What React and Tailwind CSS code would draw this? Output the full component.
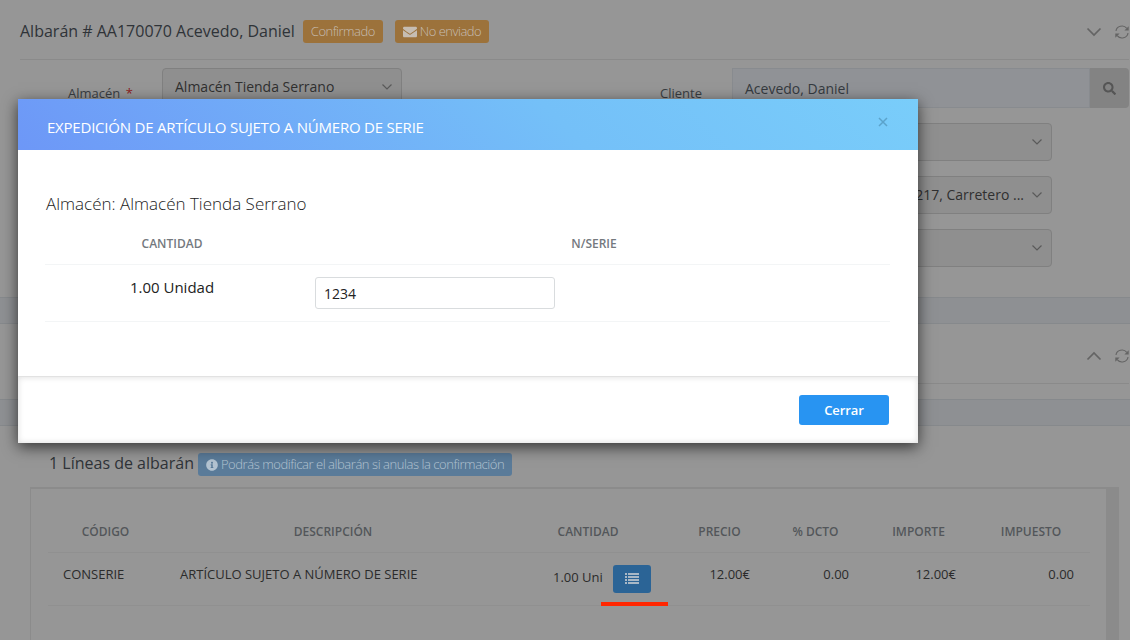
import React, { useState } from "react";
import { FaEnvelope, FaSearch, FaInfoCircle } from "react-icons/fa";

const lines = [
  {
    code: "CONSERIE",
    description: "ARTÍCULO SUJETO A NÚMERO DE SERIE",
    quantity: "1.00 Uni",
    price: "12.00€",
    discount: "0.00",
    amount: "12.00€",
    tax: "0.00",
  },
];

const lineColumns = ["CÓDIGO", "DESCRIPCIÓN", "CANTIDAD", "PRECIO", "% DCTO", "IMPORTE", "IMPUESTO"];

const lineGrid = "grid grid-cols-[115px_340px_170px_93px_99px_107px_118px]";

function ListIcon() {
  return (
    <svg width="14" height="12" viewBox="0 0 14 12" fill="currentColor" shapeRendering="crispEdges">
      {[0, 3, 6, 9].map((y) => (
        <g key={y}>
          <rect x="0" y={y} width="2" height="2" />
          <rect x="3" y={y} width="11" height="2" />
        </g>
      ))}
    </svg>
  );
}

function Chevron({ up }) {
  return (
    <svg
      width="16"
      height="10"
      viewBox="0 0 16 10"
      fill="none"
      stroke="currentColor"
      strokeWidth="1.7"
      className={up ? "rotate-180" : ""}
    >
      <path d="M1.5 1.5L8 8l6.500-6.500" />
    </svg>
  );
}

function RefreshIcon() {
  return (
    <svg width="14" height="14" viewBox="0 0 14 14" fill="none" stroke="currentColor" strokeWidth="1.100">
      <path d="M1 6a6 5.500 0 0 1 10.800-2.700M13 8a6 5.500 0 0 1-10.800 2.700" />
      <path d="M13.700 1.200v4.300h-4.300zM.3 12.800v-4.300h4.300z" fill="currentColor" stroke="none" />
    </svg>
  );
}

function Select({ value, className }) {
  return (
    <div className={`flex items-center border border-[#808080] rounded bg-[#8f8f8f] h-[38px] pl-3 pr-[9px] ${className}`}>
      <span className="flex-1 truncate">{value}</span>
      <svg width="10" height="6" viewBox="0 0 10 6" fill="none" stroke="#5a5a5a" strokeWidth="1.200" className="ml-2">
        <path d="M.5.5L5 5 9.500.5" />
      </svg>
    </div>
  );
}

function PanelTools({ open }) {
  return (
    <div className="flex items-center gap-[13px] text-[#646464]">
      <Chevron up={open} />
      <RefreshIcon />
    </div>
  );
}

function DeliveryForm() {
  return (
    <div className="flex h-[237px] pt-2 text-sm text-[#303030]">
      <div className="w-[162px] pl-[68px] pt-4 text-[13px] text-[#393d42]">
        Almacén <span className="text-[#8b2020] ml-0.5">*</span>
      </div>
      <Select value="Almacén Tienda Serrano" className="w-60" />
      <div className="w-[330px] pl-[258px] pt-4 text-[13px] text-[#393d42]">Cliente</div>
      <div className="w-[397px]">
        <div className="flex h-10 mb-[15px]">
          <div className="flex-1 flex items-center border border-[#888b8f] bg-[#909296] pl-3 pt-0.5 text-[#353a40]">
            Acevedo, Daniel
          </div>
          <button className="w-[39px] flex items-center justify-center bg-[#838383] text-[#555] rounded-r">
            <FaSearch className="w-[13px] h-[13px]" />
          </button>
        </div>
        <Select value="" className="w-80 mb-[15px]" />
        <Select value="217, Carretero ..." className="w-80 mb-[15px] text-right" />
        <Select value="" className="w-80" />
      </div>
    </div>
  );
}

function LinesTable() {
  return (
    <div className="ml-[30px] w-[1089px] h-[153px] border-l border-t-2 border-[#8b8b8b] border-r-[13px] border-r-[#8b8b8b] pl-[17px] pt-[22px]">
      <div className="w-[1042px] text-[#2b2b2b] text-[13px]">
        <div className={`${lineGrid} h-[42px] border-b border-[#909090] text-xs font-semibold text-[#53565a] text-center leading-[41px]`}>
          {lineColumns.map((name) => (
            <div key={name}>{name}</div>
          ))}
        </div>
        {lines.map((line) => (
          <div key={line.code} className={`${lineGrid} h-[53px] border-b border-[#909090] pt-3 leading-5`}>
            <div className="pl-[15px] -mt-px">{line.code}</div>
            <div className="pl-[17px] -mt-px">{line.description}</div>
            <div className="flex pl-[50px] h-7">
              <span className="w-[60px] pt-0.5">{line.quantity}</span>
              <div className="relative">
                <button className="w-[38px] h-7 rounded-[3px] bg-[#2b6496] text-[#a9b8c6] flex items-center justify-center">
                  <ListIcon />
                </button>
                <div className="absolute -left-3 top-[37px] w-[67px] h-1 bg-[#ff2600]" />
              </div>
            </div>
            <div className="text-right pr-4 -mt-px">{line.price}</div>
            <div className="text-right pr-4 -mt-px">{line.discount}</div>
            <div className="text-right pr-4 -mt-px">{line.amount}</div>
            <div className="text-right pr-4 -mt-px">{line.tax}</div>
          </div>
        ))}
      </div>
    </div>
  );
}

function SerialModal({ onClose }) {
  const [serial, setSerial] = useState("1234");

  return (
    <div className="absolute left-[18px] top-[99px] w-[900px] h-[344px] flex flex-col bg-white shadow-[0_4px_14px_rgba(0,0,0,0.65)]">
      {/* Header */}
      <div className="h-[51px] flex justify-between bg-linear-[45deg,#6d97f7,#74c0f8_60%,#79cdfa] pl-[29px] pr-[29px]">
        <h4 className="text-[15px] leading-[57px] text-white tracking-[-0.22px]">EXPEDICIÓN DE ARTÍCULO SUJETO A NÚMERO DE SERIE</h4>
        <button onClick={onClose} className="h-[46px] text-[#5ba3cb]">
          <svg width="12" height="12" viewBox="0 0 12 12" stroke="currentColor" strokeWidth="1.500">
            <path d="M2 2l8 8M10 2l-8 8" />
          </svg>
        </button>
      </div>

      {/* Body */}
      <div className="flex-1 pl-[27px] pr-7 pt-[41px] text-[#222]">
        <div className="text-[17px] leading-[25px] font-light pl-px">Almacén: Almacén Tienda Serrano</div>
        <div className="flex h-[49px] border-b border-[#f3f5f6] text-xs font-semibold text-[#74797e] leading-[55px]">
          <div className="w-[254px] text-center">CANTIDAD</div>
          <div className="flex-1 text-center pr-px">N/SERIE</div>
        </div>
        <div className="flex h-[57px] border-b border-[#f3f5f6] pt-3">
          <div className="w-[270px] pr-[16px] text-center text-[15px] leading-[21px]">1.00 Unidad</div>
          <input
            value={serial}
            onChange={(e) => setSerial(e.target.value)}
            className="w-60 h-8 border border-[#d9dcde] rounded-[3px] px-2 text-sm outline-none"
          />
        </div>
      </div>

      {/* Footer */}
      <div className="h-[67px] flex justify-end border-t border-[#e2e2e2] shadow-[inset_0_0_6px_rgba(0,0,0,0.14)] pt-[18px] pr-[29px]">
        <button onClick={onClose} className="w-[90px] h-[30px] pt-0.5 rounded-[3px] bg-[#2894f2] text-white text-[13px] font-semibold tracking-[-0.1px]">
          Cerrar
        </button>
      </div>
    </div>
  );
}

function App() {
  const [showModal, setShowModal] = useState(true);

  return (
    <div className="relative w-[1130px] h-[640px] overflow-hidden bg-[#969696] font-['Open_Sans',sans-serif] text-[#2f3338]">
      <div className="ml-5 w-[1109px] h-[60px] flex items-center border-b border-[#8a8a8a] pt-1">
        <h1 className="text-base pb-0.5">Albarán # AA170070 Acevedo, Daniel</h1>
        <span className="ml-2 h-[23px] px-2 pt-px flex items-center rounded-[3px] bg-[#9c723b] text-[#c6bdb2] text-[13px] font-light tracking-[-0.5px]">
          Confirmado
        </span>
        <span className="ml-3 h-[23px] px-2 pt-px flex items-center gap-[3px] rounded-[3px] bg-[#9c723b] text-[#c6bdb2] text-[13px] font-light tracking-[-0.5px]">
          <FaEnvelope className="w-[14px] h-[14px]" />
          No enviado
        </span>
        <div className="ml-auto">
          <PanelTools />
        </div>
      </div>

      <DeliveryForm />

      <div className="h-[27px] border-y border-[#86898c] bg-[#8e9093]" />
      <div className="ml-5 w-[1109px] h-[60px] flex items-center justify-end border-b border-[#8a8a8a] pt-1">
        <PanelTools open />
      </div>
      <div className="mt-[15px] h-[27px] border-y border-[#86898c] bg-[#8e9093]" />

      <div className="flex items-center h-[61px] pl-[49px] pt-[15px]">
        <h2 className="text-base pb-0.5">1 Líneas de albarán</h2>
        <span className="ml-1 h-[23px] px-2 pt-px flex items-center gap-[3px] rounded-[3px] bg-[#5a7b99] text-[#b3c3d1] text-[13px] font-light tracking-[-0.44px]">
          <FaInfoCircle className="w-3 h-3" />
          Podrás modificar el albarán si anulas la confirmación
        </span>
      </div>
      <LinesTable />

      {showModal && <SerialModal onClose={() => setShowModal(false)} />}
    </div>
  );
}

export default App;
